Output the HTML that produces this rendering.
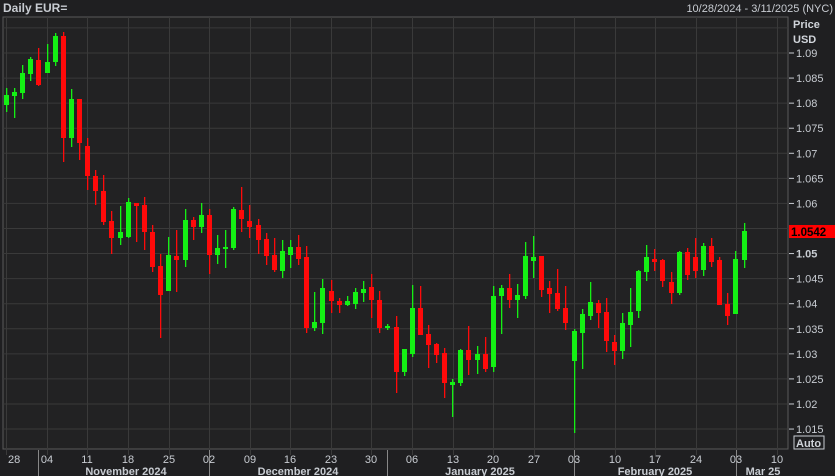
<!DOCTYPE html>
<html><head><meta charset="utf-8"><style>
html,body{margin:0;padding:0;background:#1e1e20;width:835px;height:476px;overflow:hidden;font-family:"Liberation Sans",sans-serif}
svg{display:block}
</style></head><body>
<svg id="s" width="835" height="476" xmlns="http://www.w3.org/2000/svg">
<rect x="0" y="0" width="835" height="476" fill="#1f1f21"/>
<rect x="3" y="17" width="785" height="432" fill="#222223" stroke="#5a5a5a" stroke-width="1"/>
<g id="grid" stroke="#3a3a3a" stroke-width="1"></g>
<g id="c"></g>
<text x="3" y="12" fill="#c8ccd2" font-size="12" font-weight="bold">Daily EUR=</text>
<text x="833" y="12" fill="#c8ccd2" font-size="11" text-anchor="end">10/28/2024 - 3/11/2025 (NYC)</text>
<text x="793" y="28" fill="#d0d4da" font-size="11" font-weight="bold">Price</text>
<text x="793" y="43" fill="#d0d4da" font-size="11" font-weight="bold">USD</text>
<g id="ax" fill="#c8ccd2" font-size="11"></g>
<rect x="789" y="225" width="46" height="13" fill="#ff0000"/>
<text x="791" y="236" fill="#000" font-size="11.5" font-weight="bold">1.0542</text>
<rect x="794" y="436" width="30" height="13" fill="none" stroke="#c8ccd2" stroke-width="1"/>
<text x="796" y="447" fill="#d0d4da" font-size="11" font-weight="bold">Auto</text>
<g id="bx" fill="#c8ccd2" font-size="11"></g>
</svg>
<script>
var NS="http://www.w3.org/2000/svg";
function el(p,t,a,tx){var e=document.createElementNS(NS,t);for(var k in a)e.setAttribute(k,a[k]);if(tx)e.textContent=tx;document.getElementById(p).appendChild(e);}
var wx=[6,47,87,128,169,209,250,290,331,371,412,453,493,534,574,615,655,696,736,777];
var wl=["28","04","11","18","25","02","09","16","23","30","06","13","20","27","03","10","17","24","03","10"];
wx.forEach(function(x,i){if(x>4&&x<788)el("grid","line",{x1:x+.5,y1:17,x2:x+.5,y2:449});
el("grid","line",{x1:x+.5,y1:450,x2:x+.5,y2:455});
el("bx","text",{x:x+(i==0?2:0),y:463,"text-anchor":i==0?"start":"middle"},wl[i]);});
[38,209,387,574,736].forEach(function(x){el("grid","line",{x1:x+.5,y1:450,x2:x+.5,y2:476,stroke:"#888"});});
[[126,"November 2024"],[298,"December 2024"],[480,"January 2025"],[655,"February 2025"],[763,"Mar 25"]].forEach(function(m){el("bx","text",{x:m[0],y:475,"text-anchor":"middle","font-weight":"bold"},m[1]);});
for(var k=-1;k<16;k++){var y=53+25.07*k;if(y>17&&y<449)el("grid","line",{x1:3,y1:y,x2:788,y2:y});
if(k>=0){var p=(1.09-0.005*k);var s=p.toFixed(3).replace(/0$/,"");if(s=="1.090")s="1.09";
el("ax","line",{x1:789,y1:y,x2:794,y2:y,stroke:"#c8ccd2"});
el("ax","text",{x:796,y:y+4,"font-weight":k==8?"bold":"normal"},s);}}
var d=[[6,88,112,95,105,1],[14,88,118,92,96,1],[22,65,99,73,93,1],[30,57,81,59,74,1],[38,48,86,60,85,0],[47,44,73,62,73,1],[55,33,66,36,62,1],[63,32,162,36,138,0],[71,89,147,99,138,1],[79,99,160,99,143,0],[87,138,190,146,176,0],[95,170,205,176,191,0],[103,175,225,191,222,0],[111,211,254,221,238,0],[120,206,245,232,238,1],[128,198,238,202,237,1],[136,203,242,203,206,0],[144,197,250,205,232,0],[152,225,272,232,267,0],[160,254,338,266,295,0],[168,237,291,255,291,1],[176,230,292,256,260,0],[185,209,267,220,260,1],[193,217,240,220,227,0],[201,203,233,215,227,1],[209,209,274,215,255,0],[217,235,264,248,255,1],[225,230,268,247,249,1],[233,207,250,209,248,1],[241,187,232,210,219,0],[249,205,238,221,227,0],[258,219,254,225,240,0],[266,233,265,239,256,0],[274,238,272,255,270,0],[282,240,278,251,271,1],[290,240,268,247,255,1],[298,235,265,247,259,0],[306,246,333,257,328,0],[314,292,331,322,328,1],[322,279,334,288,323,1],[331,280,313,291,301,0],[339,298,313,301,305,0],[347,296,306,301,305,1],[355,288,309,292,304,1],[363,281,302,289,293,1],[371,274,318,287,300,0],[379,291,333,300,328,0],[387,324,330,326,328,1],[396,316,393,327,372,0],[404,349,376,349,372,1],[412,285,357,308,354,1],[420,286,335,308,335,0],[428,325,368,334,345,0],[436,343,363,344,355,0],[444,348,398,353,383,0],[452,379,417,382,385,1],[460,349,386,350,383,1],[468,326,375,350,360,0],[477,346,374,354,360,1],[485,337,372,354,369,0],[493,286,372,296,367,1],[501,285,334,288,296,1],[509,274,308,288,300,0],[517,284,318,295,300,1],[525,242,299,256,296,1],[533,236,278,257,261,1],[541,256,297,256,290,0],[549,281,313,288,294,0],[557,269,311,293,309,0],[565,286,330,308,323,0],[574,329,433,331,361,1],[582,309,369,314,333,1],[590,282,320,302,316,1],[598,300,328,303,313,0],[606,298,352,312,341,0],[614,335,365,342,351,0],[622,313,359,323,351,1],[630,288,347,312,325,1],[638,270,318,271,311,1],[646,245,281,257,272,1],[654,249,271,259,262,0],[662,259,287,260,281,0],[671,272,304,282,293,0],[679,251,295,252,293,1],[687,248,280,252,275,0],[695,238,278,257,271,0],[703,243,276,246,270,1],[711,238,267,246,262,0],[719,257,305,260,305,0],[727,293,325,304,316,0],[735,251,314,259,314,1],[744,223,268,231,260,1]];
d.forEach(function(c){var col=c[5]?"#14f014":"#ff0a0a";
el("c","rect",{x:c[0],y:c[1],width:1.3,height:c[2]-c[1],fill:col});
el("c","rect",{x:c[0]-2,y:c[3],width:5,height:Math.max(2,c[4]-c[3]),fill:col});});
</script>
</body></html>
